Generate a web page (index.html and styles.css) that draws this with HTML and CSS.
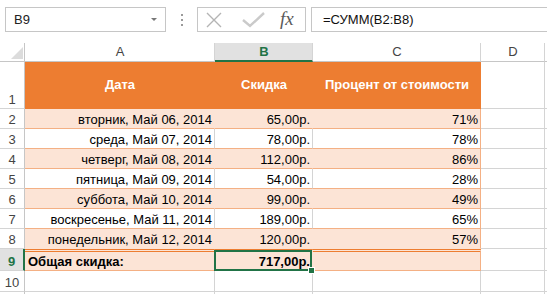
FILE: index.html
```html
<!DOCTYPE html>
<html lang="ru">
<head>
    <meta charset="UTF-8">
    <title>Общая скидка</title>
    <link rel="stylesheet" href="styles.css">
</head>
<body>
    <div class="toolbar">
        <div class="namebox">
            <span>B9</span>
            <span class="caret"></span>
        </div>
        <div class="grip"><i></i><i></i><i></i></div>
        <div class="fbuttons">
            <svg class="icon" width="16" height="16" viewBox="0 0 16 16">
                <path d="M1 1 L15 15 M15 1 L1 15" stroke="#b4b4b4" stroke-width="1.4" fill="none"/>
            </svg>
            <svg class="icon" width="24" height="16" viewBox="0 0 24 16">
                <path d="M1 8 L8 14 L22 1" stroke="#cacaca" stroke-width="2.4" fill="none"/>
            </svg>
            <span class="fx">fx</span>
        </div>
        <div class="formula">=СУММ(B2:B8)</div>
    </div>

    <div class="sheet">
        <!-- column headers -->
        <div class="cell corner"></div>
        <div class="cell hd">A</div>
        <div class="cell hd active">B</div>
        <div class="cell hd">C</div>
        <div class="cell hd">D</div>
        <div class="cell hd"></div>

        <!-- row 1 -->
        <div class="cell rh">1</div>
        <div class="cell th">Дата</div>
        <div class="cell th">Скидка</div>
        <div class="cell th">Процент от стоимости</div>
        <div class="cell"></div>
        <div class="cell"></div>

        <div class="cell rh">2</div>
        <div class="cell band">вторник, Май 06, 2014</div>
        <div class="cell band">65,00р.</div>
        <div class="cell band last">71%</div>
        <div class="cell"></div>
        <div class="cell"></div>

        <div class="cell rh">3</div>
        <div class="cell plain">среда, Май 07, 2014</div>
        <div class="cell plain">78,00р.</div>
        <div class="cell plain last">78%</div>
        <div class="cell"></div>
        <div class="cell"></div>

        <div class="cell rh">4</div>
        <div class="cell band">четверг, Май 08, 2014</div>
        <div class="cell band">112,00р.</div>
        <div class="cell band last">86%</div>
        <div class="cell"></div>
        <div class="cell"></div>

        <div class="cell rh">5</div>
        <div class="cell plain">пятница, Май 09, 2014</div>
        <div class="cell plain">54,00р.</div>
        <div class="cell plain last">28%</div>
        <div class="cell"></div>
        <div class="cell"></div>

        <div class="cell rh">6</div>
        <div class="cell band">суббота, Май 10, 2014</div>
        <div class="cell band">99,00р.</div>
        <div class="cell band last">49%</div>
        <div class="cell"></div>
        <div class="cell"></div>

        <div class="cell rh">7</div>
        <div class="cell plain">воскресенье, Май 11, 2014</div>
        <div class="cell plain">189,00р.</div>
        <div class="cell plain last">65%</div>
        <div class="cell"></div>
        <div class="cell"></div>

        <div class="cell rh">8</div>
        <div class="cell band before-total">понедельник, Май 12, 2014</div>
        <div class="cell band before-total">120,00р.</div>
        <div class="cell band before-total last">57%</div>
        <div class="cell"></div>
        <div class="cell"></div>

        <!-- total -->
        <div class="cell rh active-row">9</div>
        <div class="cell total left">Общая скидка:</div>
        <div class="cell total selected">717,00р.</div>
        <div class="cell total last"></div>
        <div class="cell"></div>
        <div class="cell"></div>

        <div class="cell rh">10</div>
        <div class="cell"></div>
        <div class="cell"></div>
        <div class="cell"></div>
        <div class="cell"></div>
        <div class="cell"></div>

        <div class="cell rh"></div>
        <div class="cell"></div>
        <div class="cell"></div>
        <div class="cell"></div>
        <div class="cell"></div>
        <div class="cell"></div>
    </div>
</body>
</html>
```

FILE: styles.css
```css
body {
    margin: 0;
    background-color: #fff;
    font-family: "Liberation Sans", Arial, sans-serif;
    font-size: 13px;
    color: #000;
    overflow: hidden;
}

/* formula bar */
.toolbar {
    display: flex;
    align-items: flex-start;
    height: 43px;
    padding: 7px 0 0 5px;
    box-sizing: border-box;
    overflow: hidden;
}

.namebox {
    display: flex;
    align-items: center;
    justify-content: space-between;
    width: 161px;
    height: 25px;
    padding: 0 8px 0 8px;
    border: 1px solid #c6c6c6;
    box-sizing: border-box;
    color: #222;
}

.caret {
    width: 0;
    height: 0;
    border-left: 3px solid transparent;
    border-right: 3px solid transparent;
    border-top: 3px solid #777;
}

.grip {
    display: flex;
    flex-direction: column;
    align-items: center;
    gap: 3px;
    width: 31px;
    padding-top: 7px;
}

.grip i {
    display: block;
    width: 2px;
    height: 2px;
    background-color: #9a9a9a;
}

.fbuttons {
    display: flex;
    align-items: center;
    width: 109px;
    height: 25px;
    padding-left: 8px;
    border: 1px solid #c6c6c6;
    box-sizing: border-box;
}

.fbuttons .icon {
    margin-right: 20px;
}

.fbuttons .icon + .icon {
    margin-right: 14px;
}

.fx {
    font-family: "Liberation Serif", "Times New Roman", serif;
    font-style: italic;
    font-size: 19px;
    color: #5a5a5a;
    line-height: 20px;
    margin-top: -2px;
}

.formula {
    flex: 1;
    height: 25px;
    margin-left: 5px;
    margin-right: -4px;
    padding-left: 11px;
    border: 1px solid #c6c6c6;
    box-sizing: border-box;
    line-height: 23px;
    color: #111;
}

/* sheet grid */
.sheet {
    display: grid;
    grid-template-columns: 25px 190px 98px 168px 64px 1fr;
    grid-template-rows: 19px 47px repeat(7, 20px) 22px 21px 21px;
}

.cell {
    display: flex;
    align-items: flex-end;
    justify-content: flex-end;
    padding: 0 2px 0 3px;
    border-right: 1px solid #d4d4d4;
    border-bottom: 1px solid #d4d4d4;
    box-sizing: border-box;
    line-height: 16px;
    white-space: nowrap;
    overflow: hidden;
}

.corner {
    position: relative;
    border-right-color: #c6c6c6;
    border-bottom-color: #c6c6c6;
}

.corner::after {
    content: "";
    position: absolute;
    right: 1px;
    bottom: 2px;
    width: 0;
    height: 0;
    border-left: 12px solid transparent;
    border-bottom: 12px solid #dcdcdc;
}

.hd {
    justify-content: center;
    align-items: center;
    color: #444;
    border-bottom-color: #c6c6c6;
}

.hd.active {
    background-color: #e1e1e1;
    color: #217346;
    font-weight: bold;
    border-bottom: 2px solid #217346;
}

.rh {
    justify-content: center;
    color: #444;
    padding: 0;
    border-right-color: #c6c6c6;
}

.rh.active-row {
    background-color: #e1e1e1;
    color: #217346;
    font-weight: bold;
    border-right: 2px solid #217346;
}

.th {
    justify-content: center;
    align-items: center;
    background-color: #ed7d31;
    color: #fff;
    font-weight: bold;
    border-right-color: #ed7d31;
    border-bottom-color: #ed7d31;
}

.band {
    background-color: #fce4d6;
    border-right-color: #fce4d6;
    border-bottom-color: #f4b084;
}

.plain {
    border-bottom-color: #f4b084;
}

.before-total {
    border-bottom-color: #fce4d6;
}

.total {
    background-color: #fce4d6;
    border-top: 3px double #ed7d31;
    border-right-color: #fce4d6;
    border-bottom-color: #f4b084;
    font-weight: bold;
}

.total.left {
    justify-content: flex-start;
    padding-left: 3px;
}

.last {
    border-right-color: #f4b084;
}

.selected {
    position: relative;
    overflow: visible;
}

.selected::after {
    content: "";
    position: absolute;
    left: -1px;
    top: -2px;
    right: 0;
    bottom: -1px;
    border: 2px solid #217346;
}

.selected::before {
    content: "";
    position: absolute;
    right: -3px;
    bottom: -4px;
    width: 5px;
    height: 5px;
    background-color: #217346;
    border: 1px solid #fff;
    z-index: 1;
}
```
